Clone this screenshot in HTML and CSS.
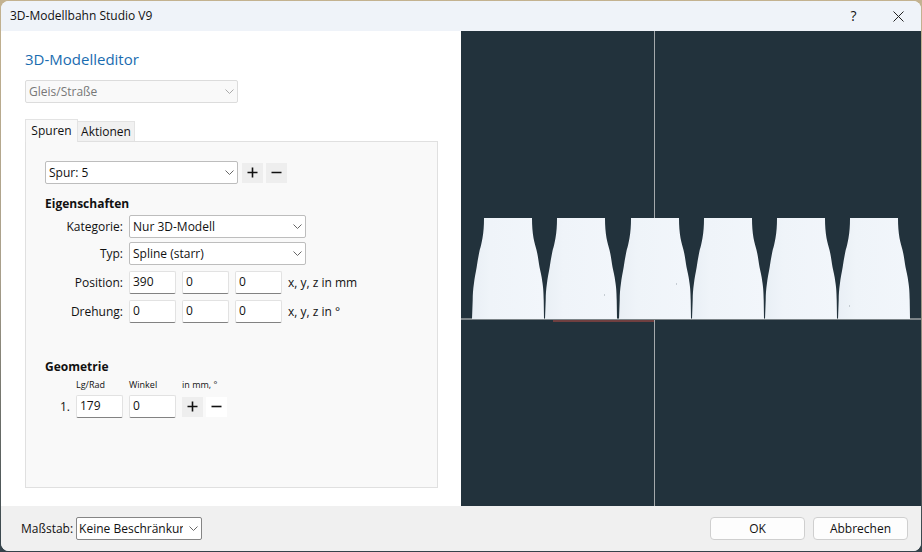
FILE: index.html
```html
<!DOCTYPE html>
<html lang="de">
<head>
    <meta charset="UTF-8">
    <meta name="viewport" content="width=device-width, initial-scale=1.0">
    <title>3D-Modellbahn Studio V9</title>
    <link rel="stylesheet" href="styles.css">
</head>
<body>
    <div class="dialog">
        <header class="titlebar">
            <span class="caption">3D-Modellbahn Studio V9</span>
            <button class="caption-button" type="button" aria-label="Hilfe">?</button>
            <button class="caption-button" type="button" aria-label="Schließen">
                <svg width="11" height="11" viewBox="0 0 11 11"><path d="M0.5 0.5L10.5 10.5M10.5 0.5L0.5 10.5"/></svg>
            </button>
        </header>

        <main class="content">
            <section class="editor">
                <h1>3D-Modelleditor</h1>
                <div class="select-box model-type">
                    <select aria-label="Modelltyp" disabled><option>Gleis/Straße</option></select>
                    <svg class="chevron" width="9" height="5" viewBox="0 0 9 5"><path d="M0.5 0.5L4.5 4.5L8.5 0.5"/></svg>
                </div>

                <div class="tabs" role="tablist">
                    <button class="tab selected" type="button" role="tab" aria-selected="true">Spuren</button>
                    <button class="tab" type="button" role="tab" aria-selected="false">Aktionen</button>
                </div>
                <div class="panel" role="tabpanel">
                    <div class="track-row">
                        <div class="select-box track">
                            <select aria-label="Spur"><option>Spur: 5</option></select>
                            <svg class="chevron" width="9" height="5" viewBox="0 0 9 5"><path d="M0.5 0.5L4.5 4.5L8.5 0.5"/></svg>
                        </div>
                        <button class="icon-button" type="button" aria-label="Spur hinzufügen">
                            <svg width="11" height="11" viewBox="0 0 11 11"><path d="M0.5 5.5H10.5M5.5 0.5V10.5"/></svg>
                        </button>
                        <button class="icon-button" type="button" aria-label="Spur entfernen">
                            <svg width="11" height="11" viewBox="0 0 11 11"><path d="M0.5 5.5H10.5"/></svg>
                        </button>
                    </div>

                    <h2>Eigenschaften</h2>
                    <div class="properties">
                        <div class="row">
                            <label class="name" for="category">Kategorie:</label>
                            <div class="select-box property">
                                <select id="category"><option>Nur 3D-Modell</option></select>
                                <svg class="chevron" width="9" height="5" viewBox="0 0 9 5"><path d="M0.5 0.5L4.5 4.5L8.5 0.5"/></svg>
                            </div>
                        </div>
                        <div class="row">
                            <label class="name" for="type">Typ:</label>
                            <div class="select-box property">
                                <select id="type"><option>Spline (starr)</option></select>
                                <svg class="chevron" width="9" height="5" viewBox="0 0 9 5"><path d="M0.5 0.5L4.5 4.5L8.5 0.5"/></svg>
                            </div>
                        </div>
                        <div class="row vector">
                            <label class="name" for="pos-x">Position:</label>
                            <input type="text" id="pos-x" value="390">
                            <input type="text" aria-label="Position y" value="0">
                            <input type="text" aria-label="Position z" value="0">
                            <span>x, y, z in mm</span>
                        </div>
                        <div class="row vector">
                            <label class="name" for="rot-x">Drehung:</label>
                            <input type="text" id="rot-x" value="0">
                            <input type="text" aria-label="Drehung y" value="0">
                            <input type="text" aria-label="Drehung z" value="0">
                            <span>x, y, z in °</span>
                        </div>
                    </div>

                    <h2 class="geometry-title">Geometrie</h2>
                    <div class="geometry">
                        <label class="small length" for="length">Lg/Rad</label>
                        <label class="small" for="angle">Winkel</label>
                        <span class="small">in mm, °</span>
                        <span class="index">1.</span>
                        <input type="text" id="length" value="179">
                        <input type="text" id="angle" value="0">
                        <div class="button-pair">
                            <button class="icon-button" type="button" aria-label="Segment hinzufügen">
                                <svg width="11" height="11" viewBox="0 0 11 11"><path d="M0.5 5.5H10.5M5.5 0.5V10.5"/></svg>
                            </button>
                            <button class="icon-button light" type="button" aria-label="Segment entfernen">
                                <svg width="11" height="11" viewBox="0 0 11 11"><path d="M0.5 5.5H10.5"/></svg>
                            </button>
                        </div>
                    </div>
                </div>
            </section>

            <section class="viewport">
                <svg viewBox="0 0 460 475" preserveAspectRatio="xMinYMin slice" role="img" aria-label="3D-Ansicht">
                    <defs>
                        <linearGradient id="shade">
                            <stop offset="0" stop-color="#e9eff5"/>
                            <stop offset="0.25" stop-color="#eff4f9"/>
                            <stop offset="1" stop-color="#f2f6fb"/>
                        </linearGradient>
                        <path id="body" d="M12 0H60C60 8 60.500 14 61.500 20C62.500 25 63.500 28 64.500 32C66 38 66.500 43 67.500 49C69 56 70 60 70.500 65C71.500 72 71.500 76 71.700 82L72 101H0L0.700 82C0.800 76 1 72 2 65C2.500 60 3.500 56 4.700 49C5.500 43 6.500 38 7.700 32C9 28 9.500 25 10.500 20C11.500 14 12 8 12 0Z" fill="url(#shade)"/>
                    </defs>
                    <path d="M193.5 0V475" stroke="#a4a9ac"/>
                    <path d="M92 290H193" stroke="#6f3f40" stroke-width="2"/>
                    <path d="M0 288H460" stroke="#7c8488" stroke-width="2"/>
                    <use href="#body" x="11" y="187"/>
                    <use href="#body" x="84" y="187"/>
                    <use href="#body" x="158" y="187"/>
                    <use href="#body" x="231" y="187"/>
                    <use href="#body" x="304" y="187"/>
                    <use href="#body" x="377" y="187"/>
                    <path d="M0 288.5H460" stroke="#7c8488"/>
                    <path d="M143 264h1M215 253h1M388 275h1" stroke="#9ba5ad"/>
                </svg>
            </section>
        </main>

        <footer class="footer">
            <label for="scale">Maßstab:</label>
            <div class="select-box scale">
                <select id="scale"><option>Keine Beschränkung</option></select>
                <svg class="chevron" width="9" height="5" viewBox="0 0 9 5"><path d="M0.5 0.5L4.5 4.5L8.5 0.5"/></svg>
            </div>
            <div class="actions">
                <button class="action" type="button">OK</button>
                <button class="action" type="button">Abbrechen</button>
            </div>
        </footer>
    </div>
</body>
</html>
```
FILE: styles.css
```css
* {
    box-sizing: border-box;
}

body {
    margin: 0;
    background: linear-gradient(#c3b290, #a89f8b 50%, #34424a);
    font-family: "Open Sans", "Noto Sans", sans-serif;
    font-size: 12px;
    line-height: 16px;
    color: #111;
}

button,
input,
select {
    font: inherit;
    color: inherit;
    margin: 0;
}

button {
    padding: 0;
    border: none;
}

svg {
    display: block;
    fill: none;
}

.dialog {
    display: flex;
    flex-direction: column;
    min-height: 100vh;
    border: 1px solid transparent;
    border-radius: 9px;
    background-clip: padding-box;
    background-color: #fff;
    overflow: hidden;
}

.titlebar {
    display: flex;
    align-items: center;
    height: 30px;
    padding-left: 9px;
    background: #eff3f9;
}

.caption {
    flex: 1;
}

.caption-button {
    display: flex;
    align-items: center;
    justify-content: center;
    width: 45px;
    height: 30px;
    background: none;
    font-size: 14px;
}

.caption-button svg {
    stroke: #222;
}

.content {
    flex: 1;
    display: flex;
}

.editor {
    width: 50%;
    display: flex;
    flex-direction: column;
    padding: 16px 23px 18px 24px;
}

h1 {
    margin: 0 0 9px;
    font-size: 15px;
    line-height: 24px;
    font-weight: normal;
    color: #1a6cb0;
}

h2 {
    margin: 0;
    font-size: 12px;
    line-height: 16px;
    font-weight: bold;
}

/* Drop-downs */
.select-box {
    position: relative;
    height: 23px;
}

.select-box select {
    display: block;
    width: 100%;
    height: 100%;
    padding: 0 18px 0 3px;
    border: 1px solid #bdbdbd;
    border-radius: 2px;
    background: #fff;
    appearance: none;
}

.select-box select:disabled {
    border-color: #dcdcdc;
    background: #f9f9f9;
    color: #777;
    opacity: 1;
}

.chevron {
    position: absolute;
    right: 4px;
    top: 9px;
    stroke: #666;
    pointer-events: none;
}

.model-type {
    width: 213px;
}

.model-type .chevron {
    stroke: #aaa;
}

.track {
    width: 193px;
    margin-right: 1px;
}

.property {
    width: 177px;
}

.scale {
    width: 126px;
}

.scale select {
    padding-left: 2px;
    border-color: #858585;
}

/* Tabs */
.tabs {
    display: flex;
    align-items: flex-end;
    margin-top: 16px;
}

.tab {
    width: 57px;
    height: 20px;
    border: 1px solid #e3e3e3;
    border-bottom: none;
    border-left: none;
    background: #f1f1f1;
}

.tab.selected {
    position: relative;
    width: 53px;
    height: 23px;
    margin-bottom: -1px;
    border-left: 1px solid #e3e3e3;
    background: #f9f9f9;
}

.panel {
    flex: 1;
    padding: 19px;
    border: 1px solid #e0e0e0;
    background: #f9f9f9;
}

.track-row {
    display: flex;
    align-items: center;
    gap: 3px;
    margin-bottom: 12px;
}

.icon-button {
    display: flex;
    align-items: center;
    justify-content: center;
    width: 21px;
    height: 20px;
    background: #eee;
}

.icon-button svg {
    stroke: #111;
    stroke-width: 1.6;
}

.icon-button.light {
    background: #fff;
}

input[type="text"] {
    width: 47px;
    height: 23px;
    padding: 0 3px 2px;
    border: 1px solid #e2e2e2;
    border-bottom-color: #828282;
    border-radius: 2px;
    background: #fff;
    outline: none;
}

.properties {
    display: flex;
    flex-direction: column;
    gap: 4px;
    margin-top: 3px;
}

.row {
    display: flex;
    align-items: center;
    gap: 6px;
}

.row .name {
    width: 78px;
    text-align: right;
}

.row.vector {
    margin-top: 2px;
}

.geometry-title {
    margin-top: 36px;
}

.geometry {
    display: grid;
    grid-template-columns: 25px 47px 47px auto;
    column-gap: 6px;
    align-items: center;
    margin-top: 3px;
}

.small {
    font-size: 9px;
    line-height: 14px;
    margin-bottom: 3px;
}

.length {
    grid-column: 2;
}

.index {
    text-align: right;
}

.button-pair {
    display: flex;
    gap: 3px;
}

.viewport {
    flex: 1;
    position: relative;
    background: #22323c;
}

.viewport svg {
    position: absolute;
    width: 100%;
    height: 100%;
}

.footer {
    display: flex;
    align-items: center;
    gap: 3px;
    height: 45px;
    padding: 0 13px 0 20px;
    background: #f0f0f0;
}

.actions {
    display: flex;
    gap: 8px;
    margin-left: auto;
}

.action {
    width: 95px;
    height: 23px;
    border: 1px solid #cfcfcf;
    border-radius: 4px;
    background: #fdfdfd;
}
```
